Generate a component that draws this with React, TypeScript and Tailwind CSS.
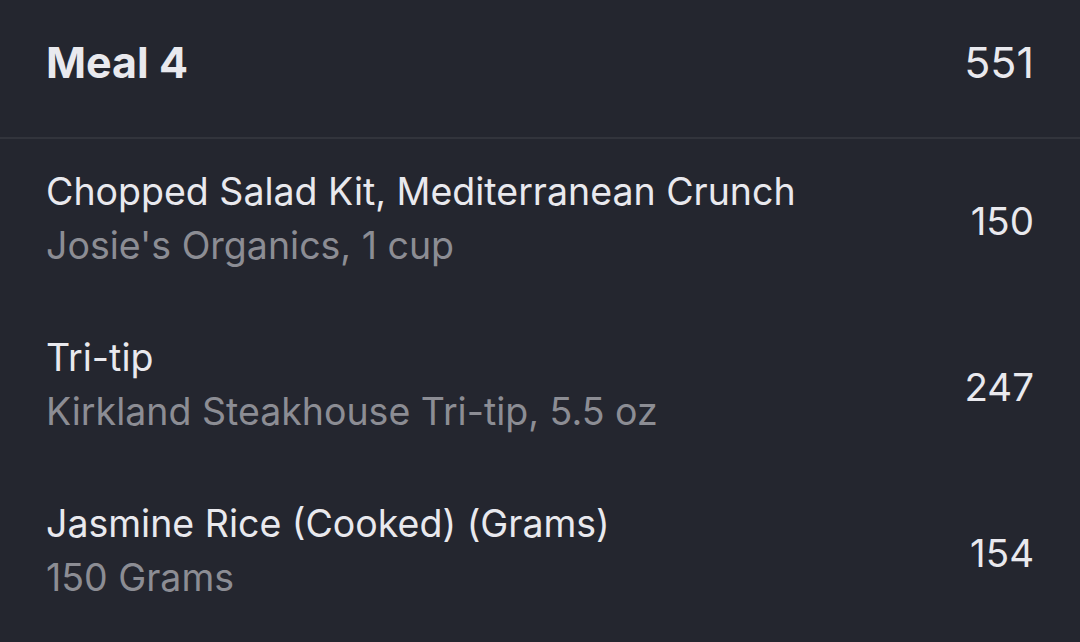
const ITEMS = [
  { name: "Chopped Salad Kit, Mediterranean Crunch", detail: "Josie's Organics, 1 cup", cal: 150 },
  { name: "Tri-tip", detail: "Kirkland Steakhouse Tri-tip, 5.5 oz", cal: 247 },
  { name: "Jasmine Rice (Cooked) (Grams)", detail: "150 Grams", cal: 154 },
];

export default function App() {
  return (
    <div className="h-[642px] w-[1080px] overflow-hidden bg-[#24262f] font-['Inter','Liberation_Sans',sans-serif] text-[#e9e9ee]">
      <div className="flex h-[137px] items-center justify-between px-[46px] pb-[12px]">
        <span className="text-[43px] font-bold">Meal 4</span>
        <span className="text-[43px]">551</span>
      </div>
      <div className="h-[2px] bg-[#32343c]" />
      {ITEMS.map((item) => (
        <div key={item.name} className="flex h-[166px] items-center justify-between px-[46px]">
          <div className="flex flex-col pb-[7px]">
            <span className="text-[37.5px] leading-[54px]">{item.name}</span>
            <span className="text-[37.5px] leading-[54px] text-[#8c8d94]">{item.detail}</span>
          </div>
          <span className="text-[38.5px]">{item.cal}</span>
        </div>
      ))}
    </div>
  );
}
